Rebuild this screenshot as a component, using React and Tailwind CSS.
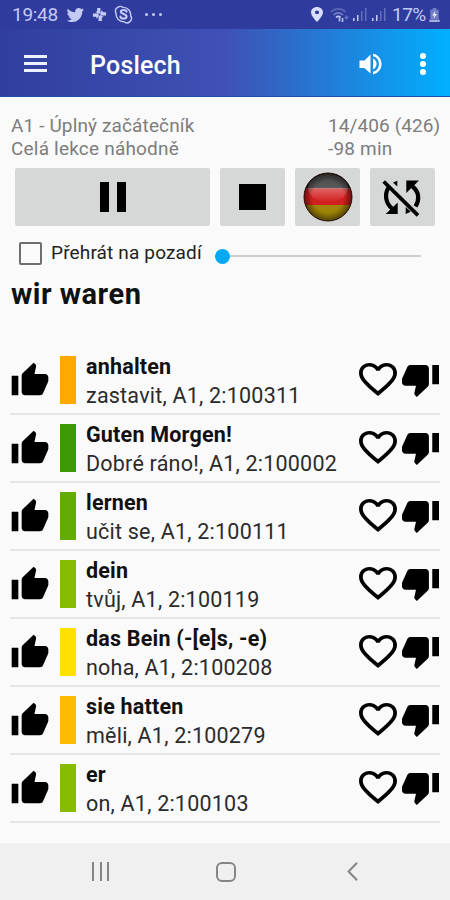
import React from "react";

const words = [
  { de: "anhalten", cs: "zastavit, A1, 2:100311", bar: "bg-[#ffa900]" },
  { de: "Guten Morgen!", cs: "Dobré ráno!, A1, 2:100002", bar: "bg-[#3c9a06]" },
  { de: "lernen", cs: "učit se, A1, 2:100111", bar: "bg-[#62ab03]" },
  { de: "dein", cs: "tvůj, A1, 2:100119", bar: "bg-[#86bb02]" },
  { de: "das Bein (-[e]s, -e)", cs: "noha, A1, 2:100208", bar: "bg-[#ffe000]" },
  { de: "sie hatten", cs: "měli, A1, 2:100279", bar: "bg-[#ffb900]" },
  { de: "er", cs: "on, A1, 2:100103", bar: "bg-[#86bb02]" },
];

function Icon({ d, className, viewBox = "0 0 24 24" }) {
  return (
    <svg viewBox={viewBox} preserveAspectRatio="none" fill="currentColor" className={className}>
      <path d={d} />
    </svg>
  );
}

const UP =
  "M1 21h4V9H1v12zm22-11c0-1.1-.9-2-2-2h-6.31l.95-4.57.03-.32c0-.41-.17-.79-.44-1.06L14.17 1 7.59 7.59C7.22 7.95 7 8.45 7 9v10c0 1.1.9 2 2 2h9c.83 0 1.54-.5 1.84-1.22l3.02-7.05c.09-.23.14-.47.14-.73v-2z";
const DOWN =
  "M15 3H6c-.83 0-1.54.5-1.84 1.22l-3.02 7.05c-.09.23-.14.47-.14.73v2c0 1.1.9 2 2 2h6.31l-.95 4.57-.03.32c0 .41.17.79.44 1.06L9.83 23l6.59-6.59c.36-.36.58-.86.58-1.41V5c0-1.1-.9-2-2-2zm4 0v12h4V3h-4z";
const HEART =
  "M16.5 3c-1.74 0-3.41.81-4.5 2.09C10.91 3.81 9.24 3 7.5 3 4.42 3 2 5.42 2 8.5c0 3.78 3.4 6.86 8.55 11.54L12 21.35l1.45-1.32C18.6 15.36 22 12.28 22 8.5 22 5.42 19.58 3 16.5 3zm-4.4 15.55l-.1.1-.1-.1C7.14 14.24 4 11.39 4 8.5 4 6.5 5.5 5 7.5 5c1.54 0 3.04.99 3.57 2.36h1.87C13.46 5.99 14.96 5 16.5 5c2 0 3.5 1.5 3.5 3.5 0 2.89-3.14 5.74-7.9 10.05z";
const TWITTER =
  "M22.46 6c-.77.35-1.6.58-2.46.69.88-.53 1.56-1.37 1.88-2.38-.83.5-1.75.85-2.72 1.05C18.37 4.5 17.26 4 16 4c-2.35 0-4.27 1.92-4.27 4.29 0 .34.04.67.11.98C8.28 9.09 5.11 7.38 3 4.79c-.37.63-.58 1.37-.58 2.15 0 1.49.75 2.81 1.91 3.56-.71 0-1.37-.2-1.95-.5v.03c0 2.08 1.48 3.82 3.44 4.21a4.22 4.22 0 0 1-1.93.07 4.28 4.28 0 0 0 4 2.98 8.521 8.521 0 0 1-5.33 1.84c-.34 0-.68-.02-1.02-.06C3.44 20.29 5.7 21 8.12 21 16 21 20.33 14.46 20.33 8.79c0-.19 0-.37-.01-.56.84-.6 1.56-1.36 2.14-2.23z";
const PIN = "M12 2C8.13 2 5 5.13 5 9c0 5.25 7 13 7 13s7-7.75 7-13c0-3.87-3.13-7-7-7zm0 9.5a2.5 2.5 0 0 1 0-5 2.5 2.5 0 0 1 0 5z";

function StatusBar() {
  return (
    <div className="flex h-[29px] items-center bg-[#303c9d] pl-3 text-[#c3cbf5]">
      <span className="w-[55px] text-[19px] leading-[29px] tracking-[-0.3px]">19:48</span>
      <Icon d={TWITTER} viewBox="2 4 20.500 17" className="h-[14px] w-[17px]" />
      <svg viewBox="0 0 16 16" className="ml-[8px] h-[15px] w-[15px]" fill="currentColor">
        <path d="M9 1v6H7L3.500 5.500 5.500 4.500V1zM15 9H9V7l1.500-3.500L12 5.500h3zM7 15V9h2l3.500 1.500-2 1V15zM1 7h6v2l-1.500 3.500L4 10.500H1z" />
      </svg>
      <svg viewBox="0 0 20 20" className="ml-[7px] h-[19px] w-[19px]" fill="none" stroke="currentColor" strokeWidth="1.5">
        <path d="M6 1.5a5 5 0 0 1 3.5 1 7.8 7.8 0 0 1 8 8.8 4.8 4.8 0 0 1-7 6.4 7.8 7.8 0 0 1-8.2-8.5A5 5 0 0 1 6 1.500z" />
        <path d="M13.200 7c-.7-2.300-6-2.400-6 .2 0 2.700 6 1.800 6 4.800 0 3-6 3-6.400.2" strokeWidth="2.200" strokeLinecap="round" />
      </svg>
      <div className="ml-[12px] flex gap-1">
        <i className="h-[3px] w-[3px] rounded-full bg-current" />
        <i className="h-[3px] w-[3px] rounded-full bg-current" />
        <i className="h-[3px] w-[3px] rounded-full bg-current" />
      </div>
      <div className="ml-auto flex items-center pr-[10px]">
        <Icon d={PIN} viewBox="5 2 14 20" className="h-[15px] w-3 text-[#d8deff]" />
        <svg viewBox="0 0 20 16" className="ml-[7px] h-4 w-5" fill="none" stroke="currentColor" strokeWidth="1.700">
          <path d="M1 5c4-4.300 10.500-4.300 14.500 0" opacity=".3" />
          <path d="M3.500 8c3-2.800 6.500-2.800 9.500 0" opacity=".45" />
          <path d="M6 10.500c1.400-1.300 3.200-1.300 4.600 0" />
          <path d="M9.500 14.500v-4M12.500 11v4" opacity=".9" />
          <path d="M14.500 10.500h4M16.500 8.500v4" opacity=".4" strokeWidth="1.300" />
        </svg>
        <svg viewBox="0 0 34 15" className="ml-[2px] h-[15px] w-[34px]" fill="currentColor">
          <path d="M1 11h1.500v3H1zM5 8h1.500v6H5zM20 11h1.500v3h-1.500zM24 8h1.500v6h-1.500z" />
          <path d="M9 4h1.500v10H9zM13 1h1.500v13h-1.500zM28 4h1.500v10h-1.500zM32 1h1.500v13h-1.500z" opacity=".35" />
        </svg>
        <span className="ml-[6px] w-[37px] text-[19px] leading-[29px] tracking-[-0.5px] whitespace-nowrap">17%</span>
        <svg viewBox="0 0 11 15" className="h-[14px] w-[11px]" fill="currentColor">
          <path d="M3.500 0h4v2H10v10H1V2h2.500z" opacity=".45" />
          <path d="M0 12.500h11V15H0z" opacity=".8" />
          <path d="M6.500 3 3 8h2.200L4.500 11.500 8 6.500H5.800z" fill="#eef0ff" />
        </svg>
      </div>
    </div>
  );
}

function Header() {
  return (
    <header className="flex h-[68px] items-center border-b border-[#1d4fae] bg-[linear-gradient(90deg,#303f9f_0%,#3f51b5_50%,#00b0ff_100%)] pl-6 text-white">
      <div className="mt-[2px] flex w-[23px] flex-col gap-[4px]">
        <i className="h-[3px] bg-[#edf0ff]" />
        <i className="h-[3px] bg-[#edf0ff]" />
        <i className="h-[3px] bg-[#edf0ff]" />
      </div>
      <h1 className="ml-[43px] pt-[6px] text-[25px] leading-8 font-medium tracking-[0.2px]">Poslech</h1>
      <svg viewBox="0 0 24 22" className="mt-[2px] mr-[37px] ml-auto h-[22px] w-6" fill="currentColor">
        <path d="M.500 7.500h5L11.500 1.500v19l-6-5.500h-5z" />
        <path d="M14 5.500a6 6 0 0 1 0 11z" />
        <path d="M14 .5a10.700 10.700 0 0 1 0 21v-2.700a8.100 8.100 0 0 0 0-15.600z" />
      </svg>
      <div className="mt-[2px] mr-6 flex flex-col gap-[2px]">
        <i className="h-[6px] w-[6px] rounded-full bg-white" />
        <i className="h-[6px] w-[6px] rounded-full bg-white" />
        <i className="h-[6px] w-[6px] rounded-full bg-white" />
      </div>
    </header>
  );
}

function Flag() {
  return (
    <svg viewBox="0 0 50 50" className="h-[50px] w-[50px]">
      <defs>
        <clipPath id="disc"><circle cx="25" cy="25" r="24" /></clipPath>
        <radialGradient id="shade" cx="50%" cy="50%" r="50%">
          <stop offset="65%" stopColor="#000" stopOpacity="0" />
          <stop offset="100%" stopColor="#000" stopOpacity=".5" />
        </radialGradient>
        <linearGradient id="shine" x1="0" y1="0" x2="0" y2="1">
          <stop offset="0%" stopColor="#fff" stopOpacity=".2" />
          <stop offset="55%" stopColor="#fff" stopOpacity=".28" />
          <stop offset="100%" stopColor="#fff" stopOpacity="0" />
        </linearGradient>
      </defs>
      <g clipPath="url(#disc)">
        <path d="M0 0h50v16.500H0z" fill="#1c1c1c" />
        <path d="M0 16.500h50V33H0z" fill="#d2201f" />
        <path d="M0 33h50v17H0z" fill="#a08408" />
        <ellipse cx="25" cy="16" rx="20" ry="14" fill="url(#shine)" />
      </g>
      <circle cx="25" cy="25" r="24" fill="url(#shade)" />
      <circle cx="25" cy="25" r="24" fill="none" stroke="#241008" strokeWidth="1" />
    </svg>
  );
}

function RepeatOff() {
  return (
    <svg viewBox="0 0 51 51" className="h-[51px] w-[51px]" fill="none" stroke="#000" strokeWidth="4.200">
      <path d="M35.500 14.500c7 5.500 7 13.500 3 20M12 15C7 22 8.500 31 15 36.500" />
      <path d="M6.700 9.500l34.300 33.800" strokeWidth="3.800" />
      <path d="M29.300 8.500H42L29.300 21zM8.700 42h12V30.500zM16 10.500l4.300-1.800v5.800zM28.700 35v7l5-2.200z" fill="#000" stroke="none" />
    </svg>
  );
}

function Key({ children }) {
  return <button className="flex h-[58px] items-center justify-center rounded-[2px] bg-[#d6d8d7]">{children}</button>;
}

function Row({ de, cs, bar }) {
  return (
    <li className="flex h-[68px] border-b-2 border-[#e5e6e6] text-black">
      <Icon d={UP} className="mt-[14px] h-[39px] w-[40px]" />
      <div className={`mt-[9px] ml-[10px] h-[48px] w-4 ${bar}`} />
      <div className="ml-[10px] flex-1 pt-[6px] whitespace-nowrap">
        <div className="text-[21.500px] leading-[28px] font-bold tracking-[0.2px] text-[#111]">{de}</div>
        <div className="text-[21.500px] leading-[29px] tracking-[0.22px] text-[#2b2b2b]">{cs}</div>
      </div>
      <Icon d={HEART} viewBox="2 3 20 18.350" className="mt-[16px] h-[33px] w-[38px]" />
      <Icon d={DOWN} viewBox="1 3 22 20" className="mt-[18px] mr-[1px] ml-[5px] h-[32px] w-[37px]" />
    </li>
  );
}

export default function App() {
  return (
    <div className="flex h-[900px] w-[450px] flex-col overflow-hidden bg-[#fafafa] font-[Roboto,sans-serif]">
      <StatusBar />
      <Header />
      <main className="flex-1 px-[10px] pt-[18px]">
        <div className="flex justify-between pl-[1px] text-[19px] leading-[22.500px] text-[#7d7d7d]">
          <div>
            <div className="tracking-[0.13px]">A1 - Úplný začátečník</div>
            <div className="tracking-[0.2px]">Celá lekce náhodně</div>
          </div>
          <div className="w-[112px] whitespace-nowrap">
            <div className="tracking-[0.1px]">14/406 (426)</div>
            <div className="tracking-[0.2px]">-98 min</div>
          </div>
        </div>
        <div className="mt-[8px] grid grid-cols-[195px_65px_65px_65px] gap-[10px] pl-[5.400px]">
          <Key>
            <div className="flex gap-2">
              <i className="h-[30px] w-[9px] bg-black" />
              <i className="h-[30px] w-[9px] bg-black" />
            </div>
          </Key>
          <Key><i className="h-[26px] w-[27px] bg-black" /></Key>
          <Key><Flag /></Key>
          <Key><RepeatOff /></Key>
        </div>
        <div className="mt-[11px] flex h-[33px] items-center pl-[9px]">
          <i className="h-[23px] w-[23px] rounded-[2px] border-2 border-[#6e6e6e]" />
          <span className="ml-[9px] w-[164px] text-[19px] tracking-[0.15px] whitespace-nowrap text-[#222]">Přehrát na pozadí</span>
          <i className="mt-[6px] h-[15px] w-[15px] rounded-full bg-[#03a9f4]" />
          <i className="mt-[5px] h-[2px] w-[191px] bg-[#cfcfcf]" />
        </div>
        <h2 className="mt-[5px] h-[72px] pl-[1px] text-[29px] leading-[38px] font-bold tracking-[0.5px] text-[#111]">wir waren</h2>
        <ul>
          {words.map((w) => <Row key={w.cs} {...w} />)}
        </ul>
      </main>
      <nav className="flex h-[57px] items-center bg-[#f0f0f0] pl-[92px] text-[#858585]">
        <div className="flex gap-[5.500px]">
          <i className="h-[19px] w-[2px] bg-current" />
          <i className="h-[19px] w-[2px] bg-current" />
          <i className="h-[19px] w-[2px] bg-current" />
        </div>
        <i className="ml-[107px] h-[20px] w-[20px] rounded-[6px] border-2 border-current" />
        <svg viewBox="0 0 11 19" className="ml-[111px] h-[19px] w-[11px]" fill="none" stroke="currentColor" strokeWidth="2">
          <path d="M10 .8 1.600 9.500 10 18.200" />
        </svg>
      </nav>
    </div>
  );
}
